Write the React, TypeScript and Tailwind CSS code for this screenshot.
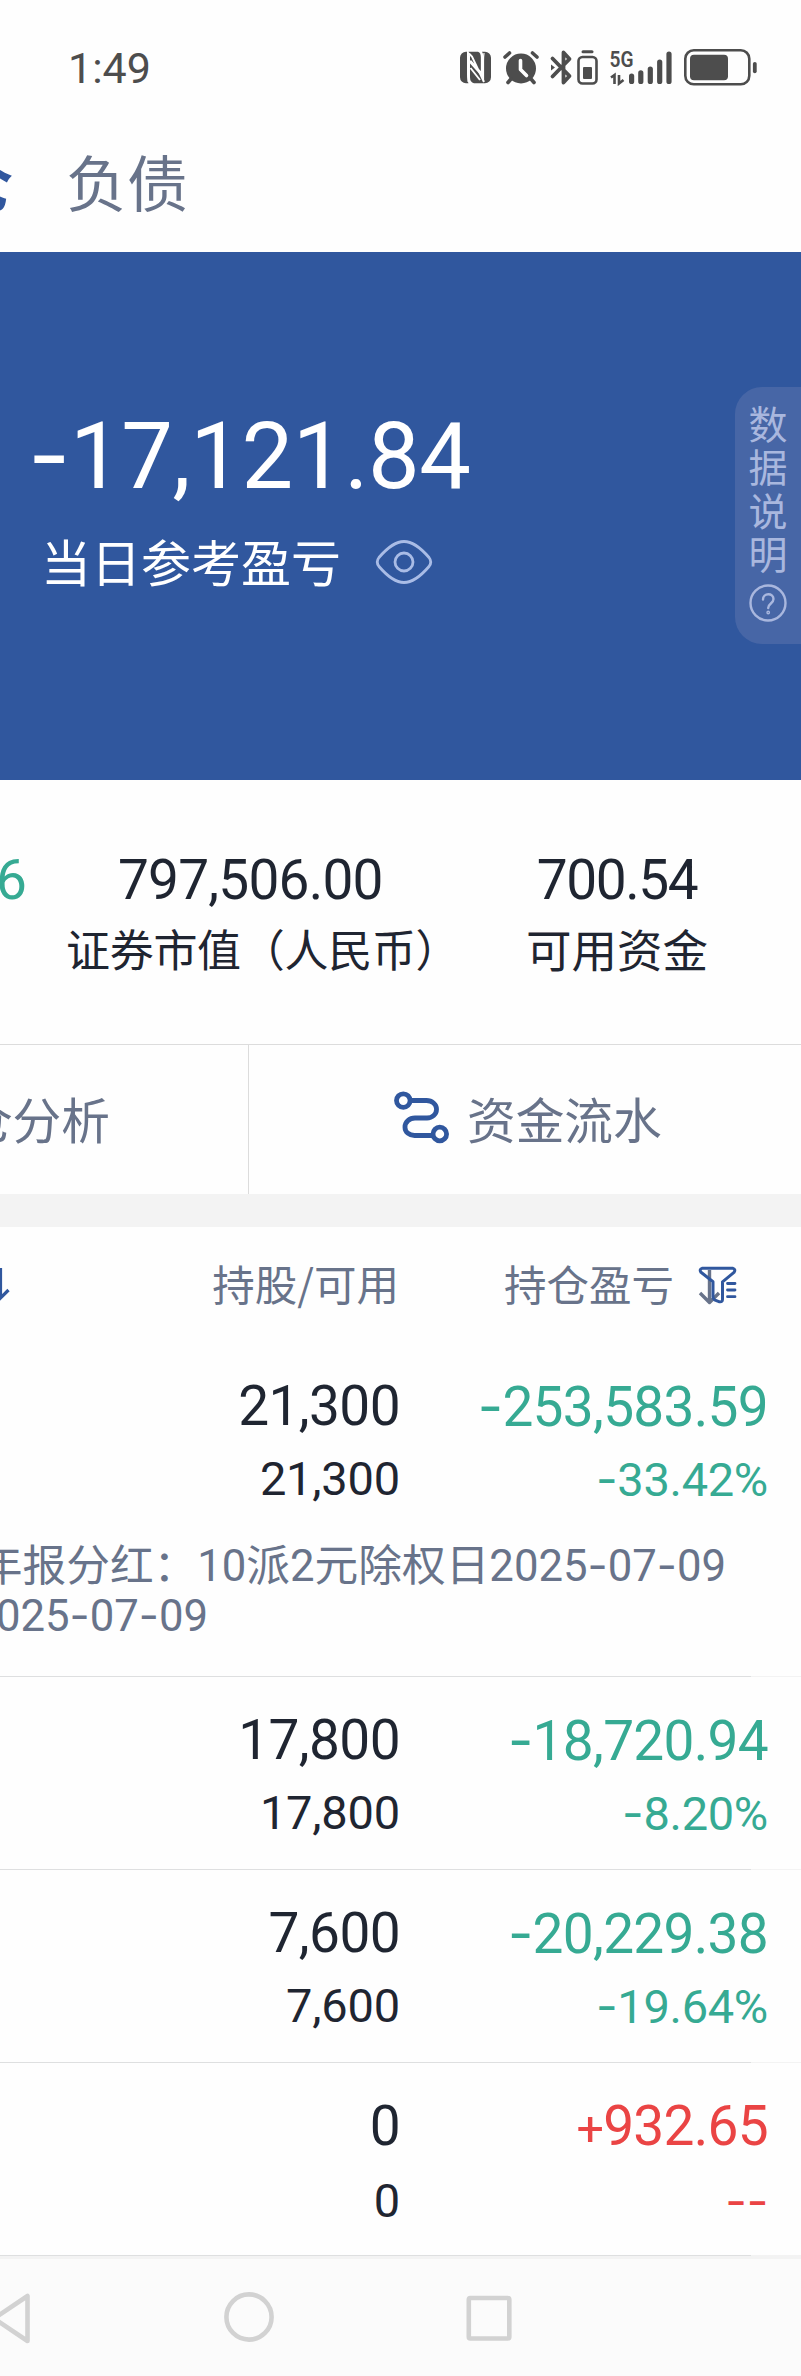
import React from "react";

const CJK = "font-['Noto_Sans_CJK_SC',sans-serif]";
const LATIN = "font-['Roboto','Noto_Sans_CJK_SC',sans-serif]";

/** Figures set in Roboto with wide dashes and a compact plus. */
function Num({ text, className }: { text: string; className: string }) {
  return (
    <span className={`${LATIN} whitespace-nowrap ${className}`}>
      {text.split(/([-+])/).map((part, i) => {
        if (part === "-")
          return (
            <span key={i} className="font-['Inter',sans-serif]">
              -
            </span>
          );
        if (part === "+")
          return (
            <span key={i} className="text-[0.88em]">
              +
            </span>
          );
        return part;
      })}
    </span>
  );
}

function StatusBar() {
  return (
    <header className="flex h-[135px] items-start justify-between pl-[68px] pr-[44px] pt-[43px] text-[#4d4d4d]">
      <Num text="1:49" className="text-[43px] leading-[50px]" />
      <svg className="mt-[3px] h-[40px] w-[300px]" viewBox="457 46 300 40" fill="none">
        <g fill="#4d4d4d">
          <path d="M467 51.7h-1a6 6 0 0 0-6 6v19.6a6 6 0 0 0 6 6h2.5q-1.5-3-1.5-9zM484 83.3h1a6 6 0 0 0 6-6V57.7a6 6 0 0 0-6-6h-3q2 3 2 9z" />
          <path d="M468.5 51.7h9.5q3 1 3 6v14L470 60v-4q0-3-1.5-4.300zM470 63.500L484 79v4.300h-10q-4-1-4-6z" />
        </g>
        <path d="M469 53.500l3 3 12 25.500M470.500 61l11.500 13M470.500 68l9.500 12M481.800 54v20" stroke="#fff" strokeWidth="1.900" />
        <path d="M467.600 54q0.600 3 .6 6v22M484 53q-.5 4-.5 8v21" stroke="#fff" strokeWidth="1.200" />
        <circle cx="521" cy="68.500" r="15" fill="#4d4d4d" />
        <g stroke="#4d4d4d" strokeWidth="3.600" strokeLinecap="round">
          <path d="M505 57l4.500-4M537 57l-4.500-4M511 79l-3 3.500M531 79l3 3.500" />
        </g>
        <path d="M520.500 60.500v9l6 6" stroke="#fff" strokeWidth="3.600" strokeLinecap="round" strokeLinejoin="round" />
        <path d="M552.500 58.500l17 17.500-6 6.500V52.500l6 6.500-17 17.500" stroke="#4d4d4d" strokeWidth="3.800" strokeLinejoin="round" strokeLinecap="round" />
        <path d="M551 64.500l4 3-4 3z" fill="#4d4d4d" />
        <rect x="578.500" y="57" width="18" height="26.500" rx="4" stroke="#4d4d4d" strokeWidth="2.600" />
        <path d="M583 51.700h9" stroke="#4d4d4d" strokeWidth="3" strokeLinecap="round" />
        <rect x="583" y="67" width="9" height="12" rx="1" fill="#4d4d4d" />
        <text x="609.500" y="66.800" fontSize="21.500" fontWeight="600" textLength="24" lengthAdjust="spacingAndGlyphs" fill="#4d4d4d" className="font-['Roboto',sans-serif]">
          5G
        </text>
        <path d="M611 77.500l3.500-2.500v9M619 75v8.500l4.500-3.500" stroke="#4d4d4d" strokeWidth="2.600" />
        <path d="M631.600 76v5.500M640.800 72.800v8.700M650.300 69v12.500M659.700 62v19.500M669 54v27.500" stroke="#4d4d4d" strokeWidth="5.200" strokeLinecap="round" />
        <rect x="685.300" y="50.300" width="64" height="34" rx="8.500" stroke="#4d4d4d" strokeWidth="2.600" />
        <rect x="690" y="54.700" width="38" height="25.600" rx="4" fill="#4d4d4d" />
        <path d="M754.800 63.800v7.500" stroke="#4d4d4d" strokeWidth="3.800" strokeLinecap="round" />
      </svg>
    </header>
  );
}

function Tabs() {
  return (
    <nav className={`flex h-[117px] items-start pt-px ${CJK} text-[61px] leading-[90px]`}>
      <div className="flex w-[13px] shrink-0 justify-end font-bold text-[#31579e]">
        <span>仓</span>
      </div>
      <span className="ml-[53px] text-[#68738a]">负债</span>
    </nav>
  );
}

function Summary() {
  return (
    <section className="flex h-[528px] items-start justify-between bg-[#30579e]">
      <div className="flex flex-col pl-[28px] pt-[153px]">
        <Num text="-17,121.84" className="text-[92px] leading-[100px] tracking-[-0.4px] text-white" />
        <div className="ml-[13px] mt-[20px] flex items-center">
          <span className={`${CJK} text-[50px] leading-[66px] text-white`}>当日参考盈亏</span>
          <svg className="ml-[33px] mt-[4px] h-[48px] w-[60px]" viewBox="0 0 60 48" fill="none" stroke="#a9bce6" strokeWidth="2.800">
            <path d="M30 3.500C38 3.500 46 9 55 19.500Q58.500 24 55 28.500C46 39 38 44.500 30 44.500S14 39 5 28.500Q1.500 24 5 19.500C14 9 22 3.500 30 3.500z" />
            <circle cx="30" cy="24" r="9" />
          </svg>
        </div>
      </div>
      <aside className="mt-[135px] flex h-[257px] w-[66px] flex-col items-center rounded-l-[27px] bg-[#4766a6] pt-[14px]">
        <div className={`flex w-[39px] flex-col ${CJK} text-[39px] leading-[43.300px] text-[#a9b7de]`}>
          <span className="break-all">数据说明</span>
        </div>
        <svg className="mt-[9px] h-[40px] w-[40px]" viewBox="0 0 40 40" fill="none" stroke="#a9b7de" strokeWidth="2.400">
          <circle cx="20" cy="20" r="17.500" />
          <path d="M15 16.500c0-7 10.500-7 10.500-.5 0 4.500-5.300 4.500-5.300 9" strokeLinecap="round" />
          <circle cx="20.200" cy="29.500" r="0.700" />
        </svg>
      </aside>
    </section>
  );
}

function Stats() {
  return (
    <section className="flex h-[264px] items-start pt-[70px] text-[#1f2531]">
      <div className="flex w-[27px] shrink-0 justify-end">
        <Num text="6" className="text-[55px] leading-[60px] text-[#36aa93]" />
      </div>
      <div className="ml-[39px] flex w-[398px] shrink-0 flex-col">
        <Num text="797,506.00" className="pl-[52px] text-[55px] leading-[60px] tracking-[-0.8px]" />
        <span className={`${CJK} mt-[6px] whitespace-nowrap text-[44px] leading-[64px] tracking-[-0.3px]`}>
          证券市值（人民币）
        </span>
      </div>
      <div className="ml-[61px] flex w-[184px] flex-col items-center">
        <Num text="700.54" className="text-[55px] leading-[60px] tracking-[-1.4px]" />
        <span className={`${CJK} mt-[6px] text-[45.500px] leading-[64px]`}>可用资金</span>
      </div>
    </section>
  );
}

function Actions() {
  return (
    <section className={`flex h-[150px] border-t border-[#dcdcdc] ${CJK} text-[48.700px] leading-[70px] text-[#68738a]`}>
      <div className="flex w-[249px] shrink-0 items-center justify-end border-r border-[#dcdcdc] pb-[3px] pr-[138px]">
        <span className="whitespace-nowrap">仓分析</span>
      </div>
      <div className="flex items-center pb-[3px] pl-[143px]">
        <svg className="mt-[-2px] h-[56px] w-[60px]" viewBox="392 1089 60 56" fill="none" stroke="#30579e" strokeWidth="4.800">
          <circle cx="403.300" cy="1100.600" r="6.800" />
          <circle cx="439.800" cy="1134" r="6.800" />
          <path d="M410 1100.500H426.500A10 8.500 0 0 1 436.500 1109V1109.500A9.500 8.500 0 0 1 427 1118H415A10 9 0 0 0 405 1127V1127.500A9.500 8 0 0 0 414.500 1135.500H433" />
        </svg>
        <span className="ml-[15px]">资金流水</span>
      </div>
    </section>
  );
}

function TableHead() {
  return (
    <div className={`flex h-[118px] items-start pt-[24px] ${CJK} text-[42.500px] leading-[64px] text-[#68738a]`}>
      <svg className="mt-[13px] h-[40px] w-[12px] shrink-0" viewBox="0 1264 12 40" fill="none" stroke="#30579e" strokeWidth="3.200">
        <path d="M0.500 1268v30l8-8" />
      </svg>
      <div className="flex w-[387px] shrink-0 justify-end">
        <span>持股/可用</span>
      </div>
      <span className="ml-[105px]">持仓盈亏</span>
      <svg className="ml-[23px] mt-[11px] h-[44px] w-[42px]" viewBox="697 1262 42 44" fill="none" strokeLinejoin="round" strokeLinecap="round">
        <path d="M709.500 1270v31M700 1293l9.500 9.500 9.500-9.500" stroke="#68738a" strokeWidth="3.400" strokeLinecap="butt" />
        <path d="M702 1268.300h31q3 1 1 4l-11.500 9.500v17.500q0 3-3 2.500l-5-2q-1.500-1-1.500-3v-15l-12-9.500q-2-3 1-4z" stroke="#30579e" strokeWidth="3" />
        <path d="M727.500 1283.500h7.500M727.500 1290h7.500M727.500 1296.700h7.500" stroke="#30579e" strokeWidth="2.800" />
      </svg>
    </div>
  );
}

type Holding = { total: string; usable: string; profit: string; rate: string; tone: string; note?: string[] };

const holdings: Holding[] = [
  {
    total: "21,300",
    usable: "21,300",
    profit: "-253,583.59",
    rate: "-33.42%",
    tone: "text-[#36aa93]",
    note: ["年报分红：10派2元除权日2025-07-09", "025-07-09"],
  },
  { total: "17,800", usable: "17,800", profit: "-18,720.94", rate: "-8.20%", tone: "text-[#36aa93]" },
  { total: "7,600", usable: "7,600", profit: "-20,229.38", rate: "-19.64%", tone: "text-[#36aa93]" },
  { total: "0", usable: "0", profit: "+932.65", rate: "--", tone: "text-[#ea4444]" },
];

function HoldingRow({ h }: { h: Holding }) {
  return (
    <>
      <div className={h.note ? "h-[331px] pt-[31px]" : "h-[192px] pt-[33px]"}>
        <div className="flex leading-[60px]">
          <div className="flex w-[400px] justify-end text-[#1f2531]">
            <Num text={h.total} className="text-[55px] tracking-[-0.6px]" />
          </div>
          <div className={`flex w-[368px] justify-end ${h.tone}`}>
            <Num text={h.profit} className="text-[55px] tracking-[-0.7px]" />
          </div>
        </div>
        <div className="mt-[12px] flex leading-[60px]">
          <div className="flex w-[400px] justify-end text-[#1f2531]">
            <Num text={h.usable} className="text-[47px] tracking-[-0.2px]" />
          </div>
          <div className={`flex w-[368px] justify-end ${h.tone}`}>
            <Num text={h.rate} className="text-[47px] tracking-[-0.3px]" />
          </div>
        </div>
        {h.note && (
          <div className="mt-[31px] text-[#68738a]">
            <div className="flex h-[50px] w-[726px] justify-end">
              <Num text={h.note[0]} className="text-[43.700px] leading-[50px]" />
            </div>
            <div className="flex h-[50px] w-[208px] justify-end">
              <Num text={h.note[1]} className="text-[43.700px] leading-[50px]" />
            </div>
          </div>
        )}
      </div>
      <div className="h-px bg-[#f3f3f3]">
        <div className="h-px w-[751px] bg-[#dedfe0]" />
      </div>
    </>
  );
}

function NavBar() {
  return (
    <footer className="flex h-[117px] items-start bg-[#fbfbfb] pt-[27px]">
      <svg className="h-[64px] w-[801px]" viewBox="0 2286 801 64" fill="none" stroke="#d2d2d2" strokeWidth="4.600" strokeLinejoin="round">
        <path d="M27.500 2296v45L-6 2318.500z" />
        <circle cx="249" cy="2317" r="22.600" />
        <rect x="468.800" y="2298" width="40.500" height="40.500" rx="1.500" />
      </svg>
    </footer>
  );
}

export default function App() {
  return (
    <main className="flex h-[2376px] w-[801px] flex-col overflow-hidden bg-[#fefefe]">
      <StatusBar />
      <Tabs />
      <Summary />
      <Stats />
      <Actions />
      <div className="h-[33px] shrink-0 bg-[#f3f3f3]" />
      <TableHead />
      {holdings.map((h) => (
        <HoldingRow key={h.profit} h={h} />
      ))}
      <div className="h-[3px] shrink-0 bg-[#f3f3f3]" />
      <NavBar />
    </main>
  );
}
